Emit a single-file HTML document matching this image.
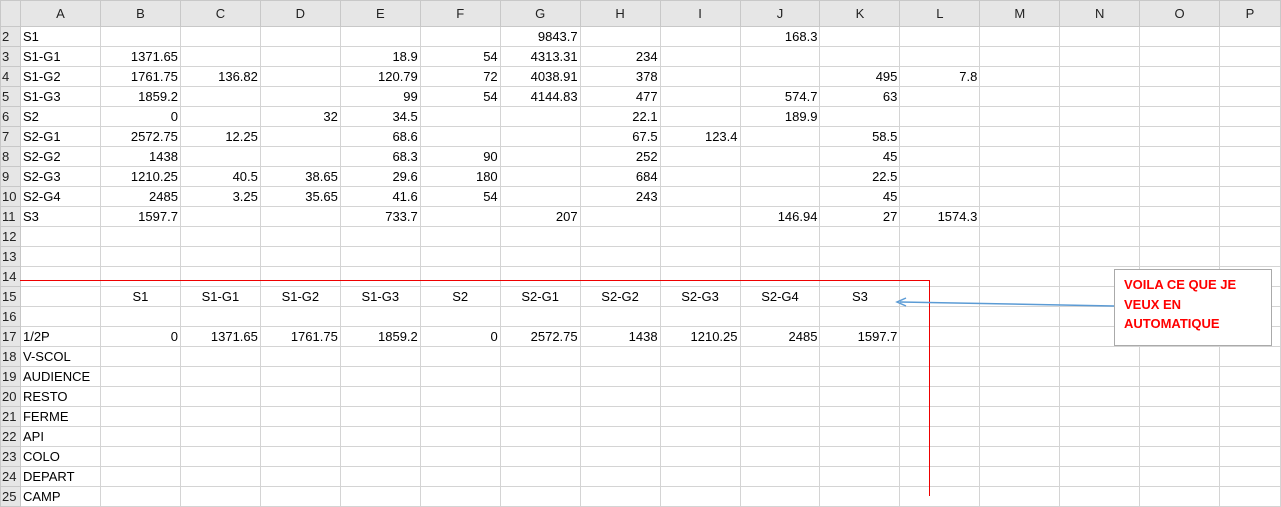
<!DOCTYPE html>
<html><head><meta charset="utf-8"><style>
body{margin:0;width:1281px;height:496px;overflow:hidden;background:#fff;font-family:"Liberation Sans",Arial,sans-serif;font-size:13px;color:#000;position:relative}
table{border-collapse:collapse;table-layout:fixed;position:absolute;left:0;top:0}
td{border:1px solid #d4d4d4;height:20px;padding:0 2px;white-space:nowrap;overflow:hidden;text-align:right;box-sizing:border-box}
td.t{text-align:left}
td.c{text-align:center}
tr.h td{background:#e6e6e6;text-align:center;height:26px;color:#222;border-color:#c8c8c8;font-size:13px}
td.rh{background:#e6e6e6;text-align:left;padding-left:1px;color:#222;border-color:#c8c8c8}
.redline{position:absolute;background:#e00}
.box{position:absolute;left:1114px;top:269px;width:158px;height:77px;border:1px solid #aaa;background:#fff;color:#f00;font-weight:bold;font-size:13px;line-height:19.5px;padding:5px 0 0 9px;box-sizing:border-box}
</style></head><body>
<table>
<colgroup><col style="width:20px"><col style="width:80px"><col style="width:80px"><col style="width:80px"><col style="width:80px"><col style="width:80px"><col style="width:80px"><col style="width:80px"><col style="width:80px"><col style="width:80px"><col style="width:80px"><col style="width:80px"><col style="width:80px"><col style="width:80px"><col style="width:80px"><col style="width:80px"><col style="width:61px"></colgroup>
<tr class="h"><td></td><td>A</td><td>B</td><td>C</td><td>D</td><td>E</td><td>F</td><td>G</td><td>H</td><td>I</td><td>J</td><td>K</td><td>L</td><td>M</td><td>N</td><td>O</td><td>P</td></tr>
<tr><td class="rh">2</td><td class="t">S1</td><td></td><td></td><td></td><td></td><td></td><td>9843.7</td><td></td><td></td><td>168.3</td><td></td><td></td><td></td><td></td><td></td><td></td></tr>
<tr><td class="rh">3</td><td class="t">S1-G1</td><td>1371.65</td><td></td><td></td><td>18.9</td><td>54</td><td>4313.31</td><td>234</td><td></td><td></td><td></td><td></td><td></td><td></td><td></td><td></td></tr>
<tr><td class="rh">4</td><td class="t">S1-G2</td><td>1761.75</td><td>136.82</td><td></td><td>120.79</td><td>72</td><td>4038.91</td><td>378</td><td></td><td></td><td>495</td><td>7.8</td><td></td><td></td><td></td><td></td></tr>
<tr><td class="rh">5</td><td class="t">S1-G3</td><td>1859.2</td><td></td><td></td><td>99</td><td>54</td><td>4144.83</td><td>477</td><td></td><td>574.7</td><td>63</td><td></td><td></td><td></td><td></td><td></td></tr>
<tr><td class="rh">6</td><td class="t">S2</td><td>0</td><td></td><td>32</td><td>34.5</td><td></td><td></td><td>22.1</td><td></td><td>189.9</td><td></td><td></td><td></td><td></td><td></td><td></td></tr>
<tr><td class="rh">7</td><td class="t">S2-G1</td><td>2572.75</td><td>12.25</td><td></td><td>68.6</td><td></td><td></td><td>67.5</td><td>123.4</td><td></td><td>58.5</td><td></td><td></td><td></td><td></td><td></td></tr>
<tr><td class="rh">8</td><td class="t">S2-G2</td><td>1438</td><td></td><td></td><td>68.3</td><td>90</td><td></td><td>252</td><td></td><td></td><td>45</td><td></td><td></td><td></td><td></td><td></td></tr>
<tr><td class="rh">9</td><td class="t">S2-G3</td><td>1210.25</td><td>40.5</td><td>38.65</td><td>29.6</td><td>180</td><td></td><td>684</td><td></td><td></td><td>22.5</td><td></td><td></td><td></td><td></td><td></td></tr>
<tr><td class="rh">10</td><td class="t">S2-G4</td><td>2485</td><td>3.25</td><td>35.65</td><td>41.6</td><td>54</td><td></td><td>243</td><td></td><td></td><td>45</td><td></td><td></td><td></td><td></td><td></td></tr>
<tr><td class="rh">11</td><td class="t">S3</td><td>1597.7</td><td></td><td></td><td>733.7</td><td></td><td>207</td><td></td><td></td><td>146.94</td><td>27</td><td>1574.3</td><td></td><td></td><td></td><td></td></tr>
<tr><td class="rh">12</td><td></td><td></td><td></td><td></td><td></td><td></td><td></td><td></td><td></td><td></td><td></td><td></td><td></td><td></td><td></td><td></td></tr>
<tr><td class="rh">13</td><td></td><td></td><td></td><td></td><td></td><td></td><td></td><td></td><td></td><td></td><td></td><td></td><td></td><td></td><td></td><td></td></tr>
<tr><td class="rh">14</td><td></td><td></td><td></td><td></td><td></td><td></td><td></td><td></td><td></td><td></td><td></td><td></td><td></td><td></td><td></td><td></td></tr>
<tr><td class="rh">15</td><td></td><td class="c">S1</td><td class="c">S1-G1</td><td class="c">S1-G2</td><td class="c">S1-G3</td><td class="c">S2</td><td class="c">S2-G1</td><td class="c">S2-G2</td><td class="c">S2-G3</td><td class="c">S2-G4</td><td class="c">S3</td><td></td><td></td><td></td><td></td><td></td></tr>
<tr><td class="rh">16</td><td></td><td></td><td></td><td></td><td></td><td></td><td></td><td></td><td></td><td></td><td></td><td></td><td></td><td></td><td></td><td></td></tr>
<tr><td class="rh">17</td><td class="t">1/2P</td><td>0</td><td>1371.65</td><td>1761.75</td><td>1859.2</td><td>0</td><td>2572.75</td><td>1438</td><td>1210.25</td><td>2485</td><td>1597.7</td><td></td><td></td><td></td><td></td><td></td></tr>
<tr><td class="rh">18</td><td class="t">V-SCOL</td><td></td><td></td><td></td><td></td><td></td><td></td><td></td><td></td><td></td><td></td><td></td><td></td><td></td><td></td><td></td></tr>
<tr><td class="rh">19</td><td class="t">AUDIENCE</td><td></td><td></td><td></td><td></td><td></td><td></td><td></td><td></td><td></td><td></td><td></td><td></td><td></td><td></td><td></td></tr>
<tr><td class="rh">20</td><td class="t">RESTO</td><td></td><td></td><td></td><td></td><td></td><td></td><td></td><td></td><td></td><td></td><td></td><td></td><td></td><td></td><td></td></tr>
<tr><td class="rh">21</td><td class="t">FERME</td><td></td><td></td><td></td><td></td><td></td><td></td><td></td><td></td><td></td><td></td><td></td><td></td><td></td><td></td><td></td></tr>
<tr><td class="rh">22</td><td class="t">API</td><td></td><td></td><td></td><td></td><td></td><td></td><td></td><td></td><td></td><td></td><td></td><td></td><td></td><td></td><td></td></tr>
<tr><td class="rh">23</td><td class="t">COLO</td><td></td><td></td><td></td><td></td><td></td><td></td><td></td><td></td><td></td><td></td><td></td><td></td><td></td><td></td><td></td></tr>
<tr><td class="rh">24</td><td class="t">DEPART</td><td></td><td></td><td></td><td></td><td></td><td></td><td></td><td></td><td></td><td></td><td></td><td></td><td></td><td></td><td></td></tr>
<tr><td class="rh">25</td><td class="t">CAMP</td><td></td><td></td><td></td><td></td><td></td><td></td><td></td><td></td><td></td><td></td><td></td><td></td><td></td><td></td><td></td></tr>
</table>
<div class="redline" style="left:20px;top:280px;width:910px;height:1px"></div>
<div class="redline" style="left:929px;top:280px;width:1px;height:216px"></div>
<svg style="position:absolute;left:0;top:0" width="1281" height="496"><line x1="1114" y1="306" x2="900" y2="302" stroke="#5b9bd5" stroke-width="1.5"/><path d="M906 298 L897 302 L906 306" fill="none" stroke="#5b9bd5" stroke-width="1.5"/></svg>
<div class="box">VOILA CE QUE JE<br>VEUX EN<br>AUTOMATIQUE</div>
</body></html>
